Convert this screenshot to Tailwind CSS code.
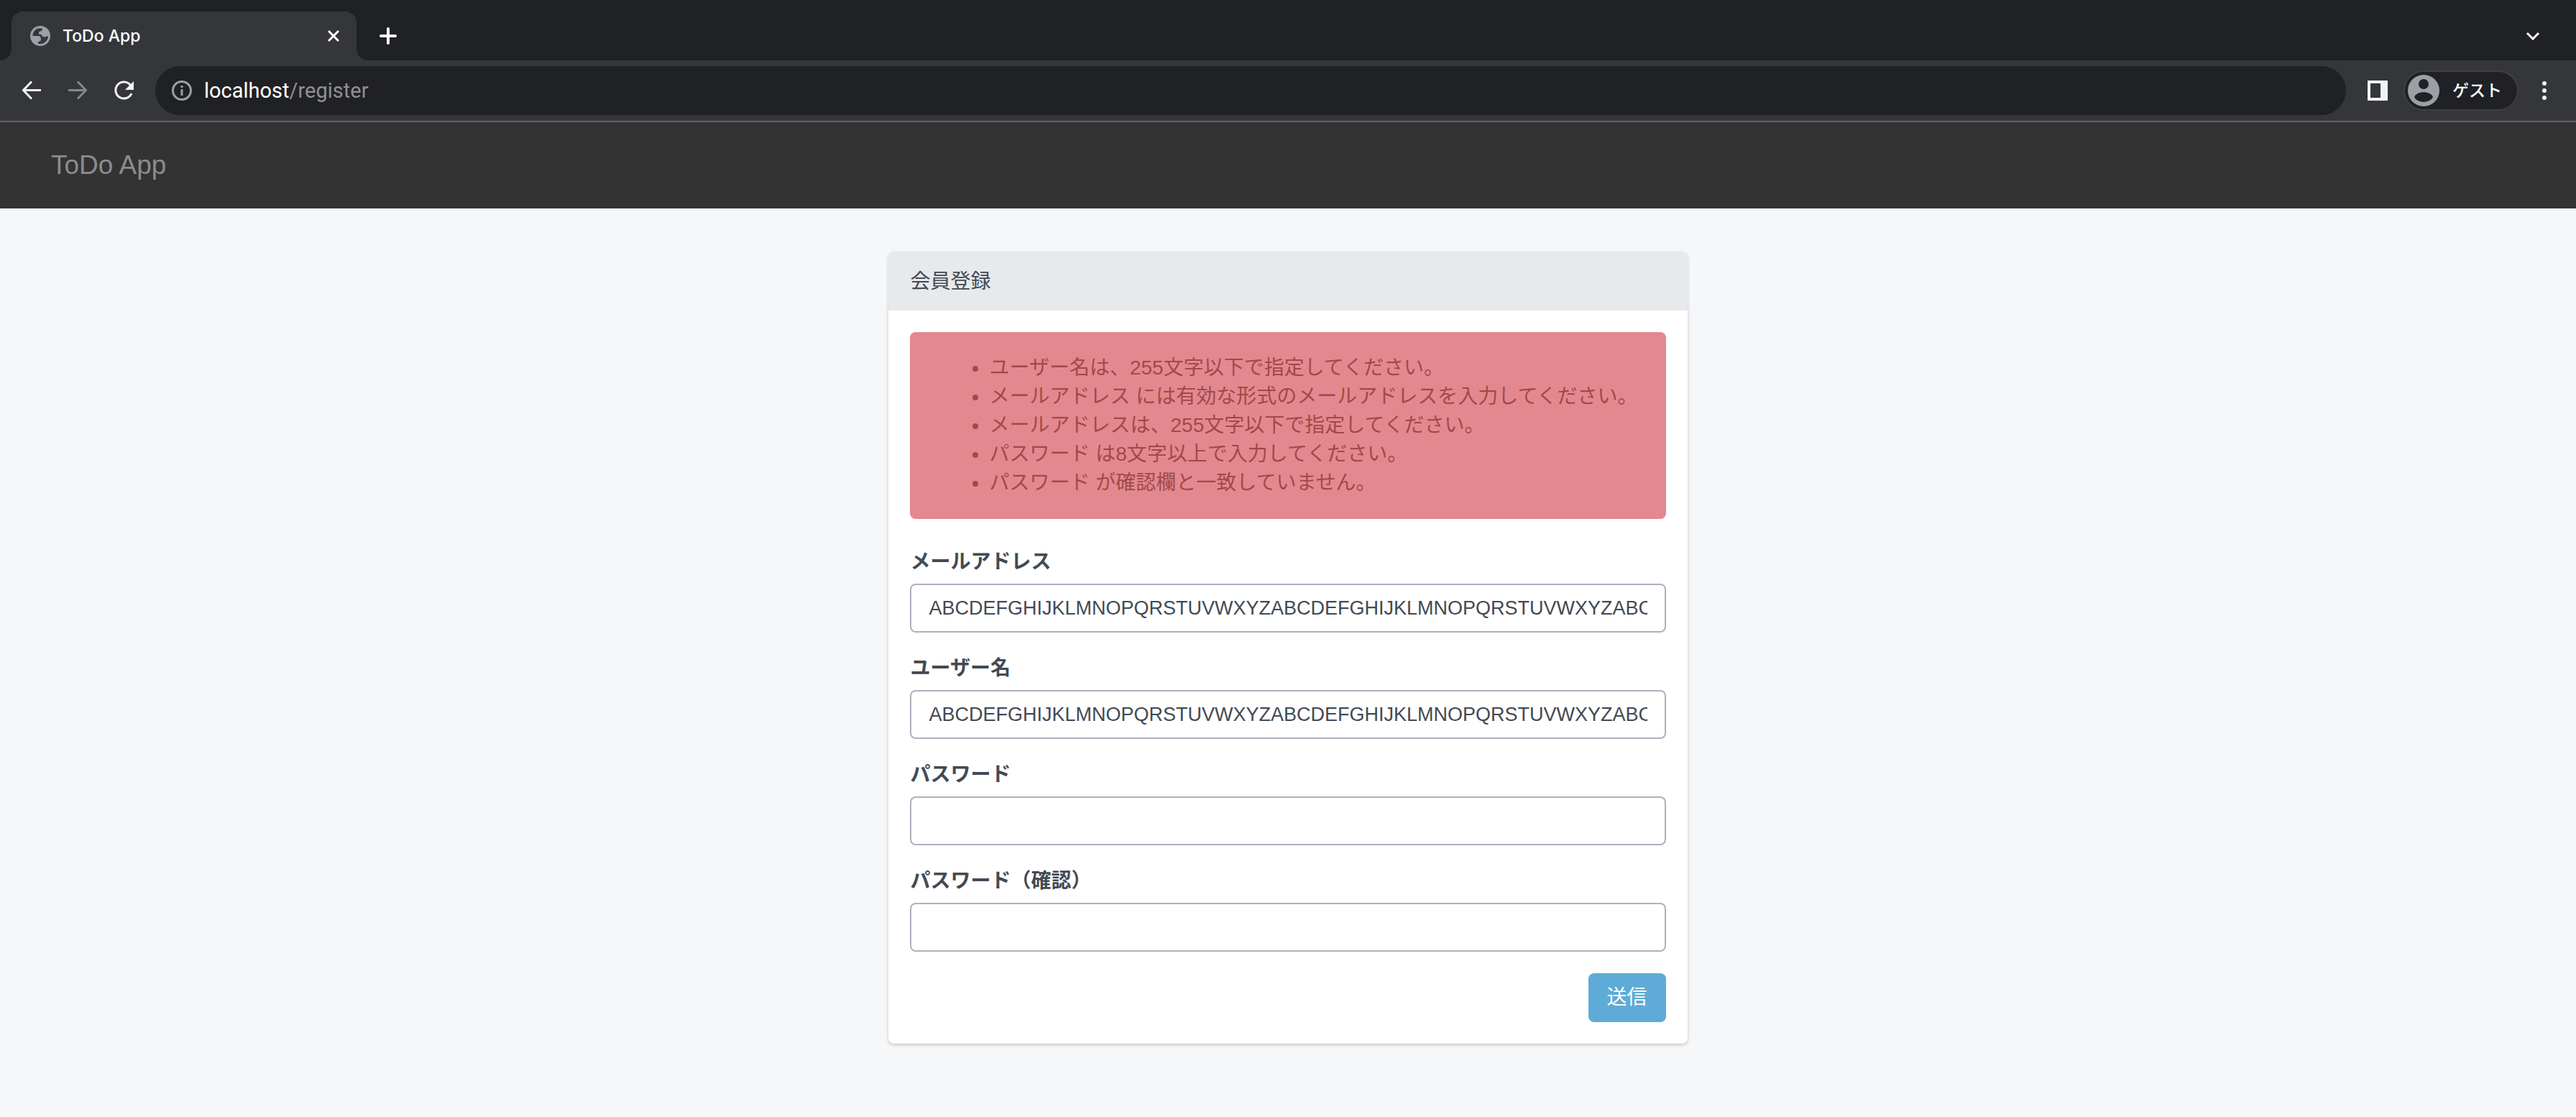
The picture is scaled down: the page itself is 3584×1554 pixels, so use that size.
<!DOCTYPE html>
<html lang="ja">
<head>
<meta charset="utf-8">
<title>ToDo App</title>
<script src="https://cdn.jsdelivr.net/npm/@tailwindcss/browser@4"></script>
</head>
<body class="min-h-screen bg-[#f5f7f9] font-['Liberation_Sans','Noto_Sans_CJK_JP',sans-serif] text-[28px] leading-10 text-[#434a54]">

<!-- Browser window: tab strip -->
<div class="flex h-[84px] items-end bg-[#202124] text-white">
  <div class="h-4 w-4 bg-[#35363a]"><div class="h-4 w-4 rounded-br-2xl bg-[#202124]"></div></div>
  <div class="flex h-[68px] w-[480px] items-center rounded-t-2xl bg-[#35363a] pr-6 pl-[26px]">
    <svg class="h-7 w-7" viewBox="0 0 28 28" aria-hidden="true"><circle cx="14" cy="14" r="14" fill="#9aa0a6"/><path d="M3.500 14C3.500 8 7.500 4 12 3.500h5c0 2.500-1 3.500-3 4l-2 1v3c3 0 4 1 5 3 2 1.500 5 1 8-.5 0 6-5 11-11 11h-3v-3c3 0 4-1 4-3 0-3-1-5-4-5z" fill="#35363a"/></svg>
    <span class="ml-[17px] font-['Inter',sans-serif] text-[23px] leading-8 font-medium">ToDo App</span>
    <button class="ml-auto" aria-label="タブを閉じる"><svg class="h-4 w-4" viewBox="0 0 16 16" fill="none" stroke="#fff" stroke-width="3"><path d="M1 1l14 14M15 1L1 15"/></svg></button>
  </div>
  <div class="h-4 w-4 bg-[#35363a]"><div class="h-4 w-4 rounded-bl-2xl bg-[#202124]"></div></div>
  <div class="flex h-[68px] flex-1 items-center justify-between pr-[50px] pl-4">
    <button aria-label="新しいタブ"><svg class="h-6 w-6" viewBox="0 0 24 24" fill="none" stroke="#fff" stroke-width="4" stroke-linecap="round"><path d="M12 2v20M2 12h20"/></svg></button>
    <button aria-label="タブを検索"><svg class="h-3 w-5" viewBox="0 0 20 12" fill="none" stroke="#fff" stroke-width="3"><path d="M2 2l8 8 8-8"/></svg></button>
  </div>
</div>

<!-- Browser window: toolbar -->
<div class="flex h-[86px] items-center border-b-2 border-[#5f6368] bg-[#35363a] pr-[40px] pl-[30px]">
  <button aria-label="戻る"><svg class="h-7 w-7" viewBox="0 0 28 28" fill="none" stroke="#f1f3f4" stroke-width="3"><path d="M27 13.500H3M14 1.500L2.500 13.500 14 25.500"/></svg></button>
  <button class="ml-9" aria-label="進む"><svg class="h-7 w-7" viewBox="0 0 28 28" fill="none" stroke="#868789" stroke-width="3"><path d="M1 13.500h24M14 1.500l11.500 12L14 25.500"/></svg></button>
  <button class="ml-9" aria-label="再読み込み"><svg class="h-7 w-7" viewBox="0 0 28 28"><path d="M23.500 6.500A11.500 11.500 0 1 0 25 18" fill="none" stroke="#f1f3f4" stroke-width="3"/><path d="M28 1v12H16z" fill="#f1f3f4"/></svg></button>
  <div class="ml-[30px] flex h-[68px] flex-1 items-center rounded-full bg-[#202124] pl-[23px]">
    <svg class="h-7 w-7" viewBox="0 0 28 28" aria-hidden="true"><circle cx="14" cy="14" r="12.500" fill="none" stroke="#9aa0a6" stroke-width="3"/><path d="M12.500 12h3v9h-3zM12.500 7h3v3h-3z" fill="#9aa0a6"/></svg>
    <div role="textbox" aria-label="アドレス" class="ml-[17px] font-['Roboto',sans-serif] text-[29px] text-white">localhost<span class="text-[#8f9193]">/register</span></div>
  </div>
  <button class="ml-[30px]" aria-label="サイドパネル"><svg class="h-7 w-7" viewBox="0 0 28 28"><path d="M0 0h28v28H0zM4 4v20h14V4z" fill="#f1f3f4" fill-rule="evenodd"/></svg></button>
  <button class="ml-[22px] flex h-14 items-center rounded-full border-2 border-[#3f3f44] bg-[#202124] pr-[21px] pl-1 text-[23px] font-medium text-white">
    <svg class="h-11 w-11" viewBox="0 0 44 44" aria-hidden="true"><circle cx="22" cy="22" r="22" fill="#9aa0a6"/><circle cx="22" cy="13" r="7" fill="#202124"/><path d="M9 31c3-9 23-9 26 0-4 9-22 9-26 0z" fill="#202124"/></svg>
    <span class="ml-[18px]">ゲスト</span>
  </button>
  <button class="ml-8" aria-label="メニュー"><svg class="h-7 w-2" viewBox="0 0 8 28" fill="#f1f3f4"><circle cx="4" cy="4" r="3"/><circle cx="4" cy="14" r="3"/><circle cx="4" cy="24" r="3"/></svg></button>
</div>

<!-- Site header -->
<header class="flex h-[120px] items-center bg-[#333333] px-[71px]">
  <a href="/" class="text-[37px] text-[#8c8c8c]">ToDo App</a>
</header>

<main class="mx-auto mt-[60px] w-[31%]">
  <section class="overflow-hidden rounded-lg bg-white shadow-[0_2px_4px_rgba(0,0,0,0.2)]">
    <h1 class="bg-[#e7e9ec] px-[30px] pt-[22px] pb-5">会員登録</h1>
    <div class="p-[30px]">
      <ul class="mb-10 list-disc rounded-lg bg-[#e48890] py-[30px] pr-[30px] pl-[110px] text-[#a14a47]">
        <li>ユーザー名は、255文字以下で指定してください。</li>
        <li>メールアドレス には有効な形式のメールアドレスを入力してください。</li>
        <li>メールアドレスは、255文字以下で指定してください。</li>
        <li>パスワード は8文字以上で入力してください。</li>
        <li>パスワード が確認欄と一致していません。</li>
      </ul>
      <form class="flex flex-col gap-[30px]">
        <div class="flex flex-col gap-[10px]">
          <label for="email" class="font-bold">メールアドレス</label>
          <input id="email" type="text" class="h-[68px] rounded-lg border-2 border-[#aab2bd] px-6 text-[27px]" value="ABCDEFGHIJKLMNOPQRSTUVWXYZABCDEFGHIJKLMNOPQRSTUVWXYZABCDEFGHIJKLMNOPQRSTUVWXYZ">
        </div>
        <div class="flex flex-col gap-[10px]">
          <label for="name" class="font-bold">ユーザー名</label>
          <input id="name" type="text" class="h-[68px] rounded-lg border-2 border-[#aab2bd] px-6 text-[27px]" value="ABCDEFGHIJKLMNOPQRSTUVWXYZABCDEFGHIJKLMNOPQRSTUVWXYZABCDEFGHIJKLMNOPQRSTUVWXYZ">
        </div>
        <div class="flex flex-col gap-[10px]">
          <label for="password" class="font-bold">パスワード</label>
          <input id="password" type="password" class="h-[68px] rounded-lg border-2 border-[#aab2bd] px-6 text-[27px]">
        </div>
        <div class="flex flex-col gap-[10px]">
          <label for="password-confirm" class="font-bold">パスワード（確認）</label>
          <input id="password-confirm" type="password" class="h-[68px] rounded-lg border-2 border-[#aab2bd] px-6 text-[27px]">
        </div>
        <button type="submit" class="h-[68px] self-end rounded-lg bg-[#5dabd6] px-[26px] text-white">送信</button>
      </form>
    </div>
  </section>
</main>
</body>
</html>
